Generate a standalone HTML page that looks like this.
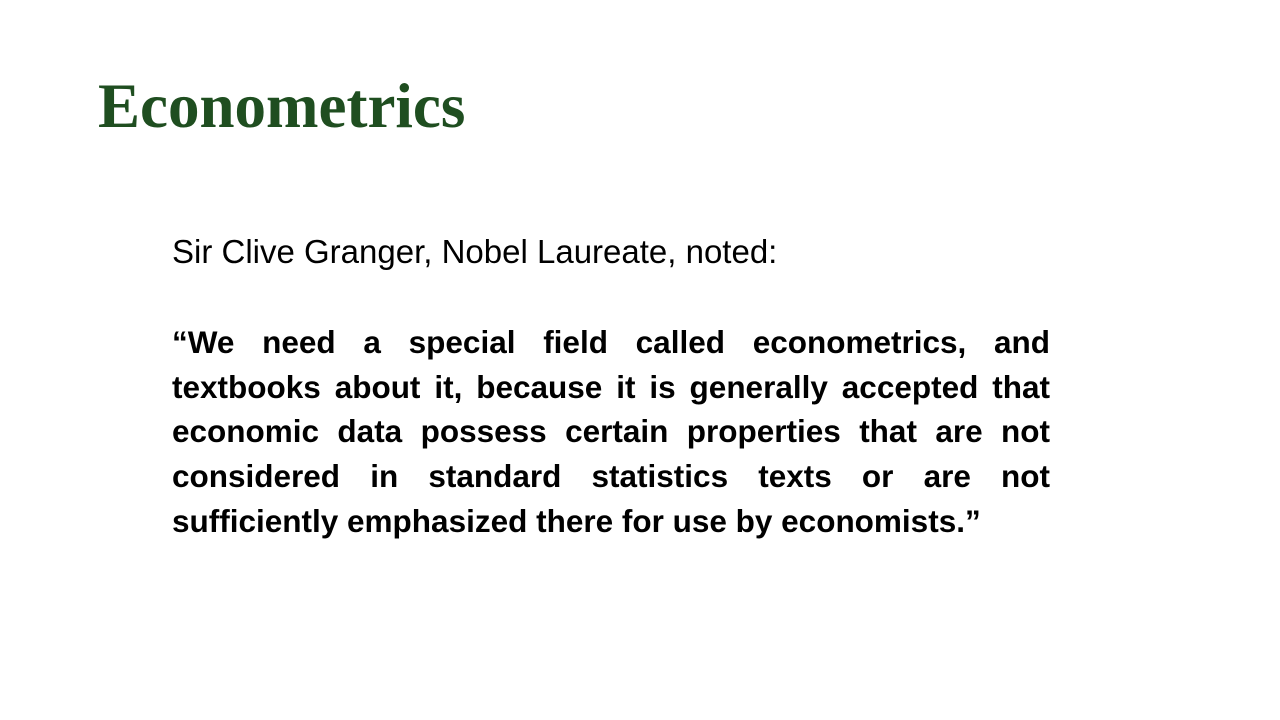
<!DOCTYPE html>
<html><head><style>
body{margin:0;width:1280px;height:720px;background:#fff;position:relative;overflow:hidden}
h1{position:absolute;left:98px;top:66px;margin:0;font:bold 63px/80px "Liberation Serif",serif;color:#1f4e20}
.t{position:absolute;left:172px;width:878px;font-family:"Liberation Sans",sans-serif;color:#000}
.l{display:block;line-height:44.7px;text-align:justify;text-align-last:justify;white-space:nowrap}
.q{font-weight:bold;font-size:31.5px}
.q .l{white-space:normal}
</style></head><body>
<h1>Econometrics</h1>
<div class="t" style="top:230px;line-height:44px;font-size:33px">Sir Clive Granger, Nobel Laureate, noted:</div>
<div class="t q" style="top:320px">
<span class="l">“We need a special field called econometrics, and</span>
<span class="l">textbooks about it, because it is generally accepted that</span>
<span class="l">economic data possess certain properties that are not</span>
<span class="l">considered in standard statistics texts or are not</span>
<span class="l" style="text-align-last:left">sufficiently emphasized there for use by economists.”</span>
</div>
</body></html>
